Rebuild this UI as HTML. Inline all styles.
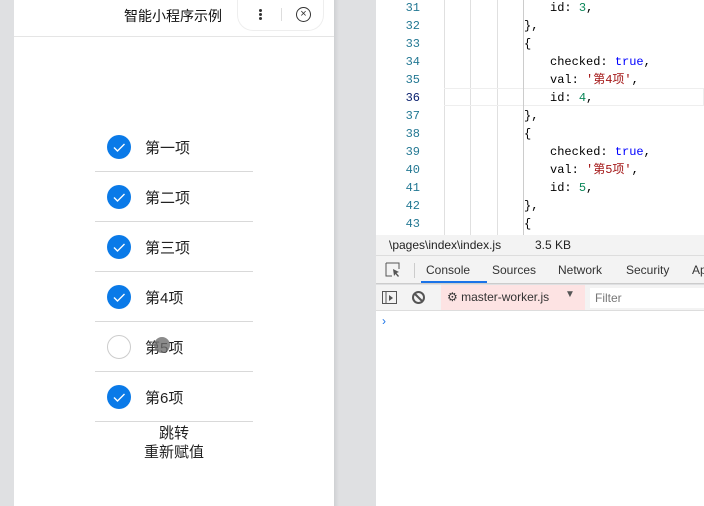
<!DOCTYPE html>
<html><head><meta charset="utf-8"><style>
*{margin:0;padding:0;box-sizing:border-box}
body{width:704px;height:506px;overflow:hidden;background:#dfe0e2;font-family:"Liberation Sans","Noto Sans CJK SC",sans-serif;position:relative}
.phone{position:absolute;left:14px;top:0;width:320px;height:506px;background:#fff}
.nav{position:absolute;left:0;top:0;width:320px;height:37px;border-bottom:1px solid #e5e5e5}
.title{position:absolute;left:110px;top:6px;font-size:14px;color:#111}
.capsule{position:absolute;left:223px;top:0;width:87px;height:31px;border:1px solid #eee;border-top:none;border-radius:0 0 16px 16px}
.row{position:absolute;left:81px;width:158px;height:50px;border-bottom:1px solid #d9d9d9}
.cb{position:absolute;left:12px;top:13px;width:24px;height:24px;border-radius:50%;background:#0a7ae8}
.cb.off{background:#fff;border:1px solid #ccc}
.lbl{position:absolute;left:50px;top:15px;font-size:15px;color:#222}
.ed{position:absolute;left:376px;top:0;width:328px;height:235px;background:#fff;font-family:"Liberation Mono","Noto Sans CJK SC",monospace;font-size:12px}
.ln{position:absolute;left:0;width:44px;text-align:right;color:#237893;line-height:16px;height:18px}
.cd{position:absolute;color:#000;white-space:pre;line-height:16px;height:18px;overflow:visible}
.cd .s{font-size:12px;line-height:16px;vertical-align:top}
.g{position:absolute;top:0;width:1px;height:235px;background:#e0e0e0}
.k{color:#00f}.s{color:#a31515}.n{color:#098658}
</style></head><body>
<div class="phone">
 <div class="nav"><div class="title">智能小程序示例</div>
  <div class="capsule">
   <div style="position:absolute;left:21px;top:9px;width:3px;height:3px;background:#333;border-radius:50%;box-shadow:0 4px #333,0 8px #333"></div>
   <div style="position:absolute;left:43px;top:8px;width:1px;height:13px;background:#ddd"></div>
   <div style="position:absolute;left:58px;top:7px;width:15px;height:15px;border:1.3px solid #333;border-radius:50%;font-size:11px;line-height:12px;text-align:center;color:#333">×</div>
  </div>
 </div>
 <div class="row" style="top:122px"><div class="cb"><svg width="24" height="24"><path d="M7 12.5l3.5 3.5 7-7" stroke="#fff" stroke-width="1.4" fill="none"/></svg></div><div class="lbl">第一项</div></div>
 <div class="row" style="top:172px"><div class="cb"><svg width="24" height="24"><path d="M7 12.5l3.5 3.5 7-7" stroke="#fff" stroke-width="1.4" fill="none"/></svg></div><div class="lbl">第二项</div></div>
 <div class="row" style="top:222px"><div class="cb"><svg width="24" height="24"><path d="M7 12.5l3.5 3.5 7-7" stroke="#fff" stroke-width="1.4" fill="none"/></svg></div><div class="lbl">第三项</div></div>
 <div class="row" style="top:272px"><div class="cb"><svg width="24" height="24"><path d="M7 12.5l3.5 3.5 7-7" stroke="#fff" stroke-width="1.4" fill="none"/></svg></div><div class="lbl">第4项</div></div>
 <div class="row" style="top:322px"><div class="cb off"></div><div class="lbl">第5项</div><div style="position:absolute;left:59px;top:15px;width:16px;height:16px;border-radius:50%;background:rgba(110,110,110,.8)"></div></div>
 <div class="row" style="top:372px"><div class="cb"><svg width="24" height="24"><path d="M7 12.5l3.5 3.5 7-7" stroke="#fff" stroke-width="1.4" fill="none"/></svg></div><div class="lbl">第6项</div></div>
 <div style="position:absolute;left:0;width:320px;top:424px;text-align:center;font-size:15px;line-height:19px;color:#222">跳转<br>重新赋值</div>
</div>
<div style="position:absolute;left:334px;top:0;width:5px;height:506px;background:linear-gradient(90deg,#cfd0d3,#dfe0e2)"></div>
<div class="ed">
 <div class="g" style="left:68px"></div><div class="g" style="left:94px"></div><div class="g" style="left:121px"></div>
 <div style="position:absolute;left:68px;top:88px;width:260px;height:18px;border:1px solid #eee;border-left:none"></div>
 <div class="g" style="left:147px;background:#ccc;top:0"></div>
 <div class="ln" style="top:0">31</div><div class="cd" style="left:174px;top:0">id: <span class="n">3</span>,</div>
 <div class="ln" style="top:18px">32</div><div class="cd" style="left:148px;top:18px">},</div>
 <div class="ln" style="top:36px">33</div><div class="cd" style="left:148px;top:36px">{</div>
 <div class="ln" style="top:54px">34</div><div class="cd" style="left:174px;top:54px">checked: <span class="k">true</span>,</div>
 <div class="ln" style="top:72px">35</div><div class="cd" style="left:174px;top:72px">val: <span class="s">'第4项'</span>,</div>
 <div class="ln" style="top:90px;color:#0b216f">36</div><div class="cd" style="left:174px;top:90px">id: <span class="n">4</span>,</div>
 <div class="ln" style="top:108px">37</div><div class="cd" style="left:148px;top:108px">},</div>
 <div class="ln" style="top:126px">38</div><div class="cd" style="left:148px;top:126px">{</div>
 <div class="ln" style="top:144px">39</div><div class="cd" style="left:174px;top:144px">checked: <span class="k">true</span>,</div>
 <div class="ln" style="top:162px">40</div><div class="cd" style="left:174px;top:162px">val: <span class="s">'第5项'</span>,</div>
 <div class="ln" style="top:180px">41</div><div class="cd" style="left:174px;top:180px">id: <span class="n">5</span>,</div>
 <div class="ln" style="top:198px">42</div><div class="cd" style="left:148px;top:198px">},</div>
 <div class="ln" style="top:216px">43</div><div class="cd" style="left:148px;top:216px">{</div>
</div>
<div style="position:absolute;left:376px;top:235px;width:328px;height:21px;background:#f3f3f3;font-size:12px;color:#222;border-bottom:1px solid #ddd"><span style="position:absolute;left:13px;top:3px">\pages\index\index.js</span><span style="position:absolute;left:159px;top:3px">3.5 KB</span></div>
<div style="position:absolute;left:376px;top:256px;width:328px;height:28px;background:#f3f3f3;font-size:12px;color:#333;border-bottom:1px solid #ccc">
 <svg style="position:absolute;left:9px;top:6px" width="16" height="16"><path d="M1 1h13v6M1 1v13h6" stroke="#555" fill="none"/><path d="M8 7l6 3-2.5 1 2.5 3-1 1-2.5-3-1.5 2z" fill="#555"/></svg>
 <div style="position:absolute;left:38px;top:7px;width:1px;height:15px;background:#ccc"></div>
 <span style="position:absolute;left:50px;top:7px">Console</span>
 <div style="position:absolute;left:45px;top:25px;width:66px;height:2px;background:#1a73e8"></div>
 <span style="position:absolute;left:116px;top:7px">Sources</span>
 <span style="position:absolute;left:182px;top:7px">Network</span>
 <span style="position:absolute;left:250px;top:7px">Security</span>
 <span style="position:absolute;left:316px;top:7px">Ap</span>
</div>
<div style="position:absolute;left:376px;top:285px;width:328px;height:26px;background:#f3f3f3;font-size:12px;border-bottom:1px solid #ddd">
 <svg style="position:absolute;left:6px;top:6px" width="16" height="14"><rect x="0.5" y="0.5" width="14" height="12" stroke="#555" fill="none"/><path d="M4 1v12" stroke="#555"/><path d="M7 4l4 3-4 3z" fill="#555"/></svg>
 <svg style="position:absolute;left:35px;top:5px" width="15" height="15"><circle cx="7.5" cy="7.5" r="5.5" stroke="#555" stroke-width="2" fill="none"/><path d="M3.5 3.5l8 8" stroke="#555" stroke-width="2"/></svg>
 <div style="position:absolute;left:65px;top:0;width:144px;height:25px;background:#fde3e3;color:#333"><span style="position:absolute;left:6px;top:5px">⚙ master-worker.js</span><span style="position:absolute;left:124px;top:4px;font-size:10px;color:#555">▼</span></div>
 <div style="position:absolute;left:214px;top:3px;width:114px;height:20px;background:#fff;color:#777"><span style="position:absolute;left:5px;top:3px">Filter</span></div>
</div>
<div style="position:absolute;left:376px;top:311px;width:328px;height:195px;background:#fff"><span style="position:absolute;left:6px;top:3px;color:#1a73e8;font-size:12px">›</span></div>
</body></html>
